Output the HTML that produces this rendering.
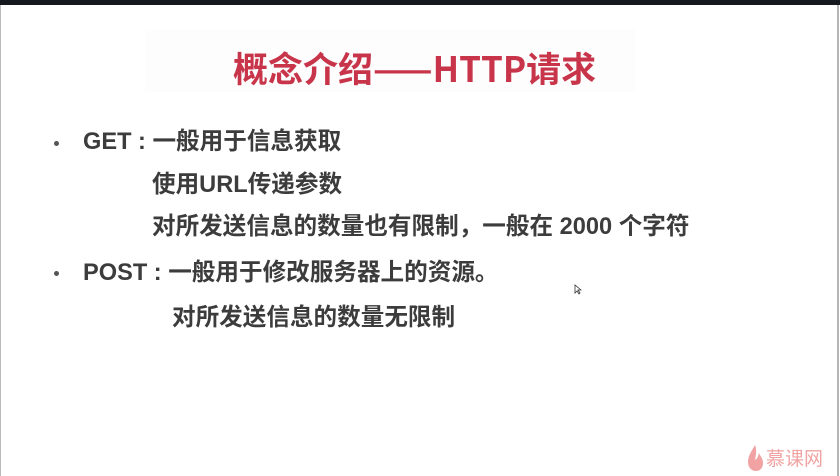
<!DOCTYPE html>
<html><head><meta charset="utf-8"><style>
body{margin:0;width:840px;height:476px;overflow:hidden;background:#fff;position:relative;font-family:"Liberation Sans","Noto Sans CJK SC",sans-serif}
.top{position:absolute;left:0;top:0;width:840px;height:5px;background:#15191d}
.lb{position:absolute;left:0;top:5px;width:1px;height:471px;background:#bbb}
.rb{position:absolute;left:837px;top:5px;width:2px;height:471px;background:#b5b5b5}
.tbox{position:absolute;left:145px;top:29px;width:490px;height:63px;background:#fdfdfd}
.title{position:absolute;left:233px;top:46px;font-size:35px;font-weight:bold;color:#c8354a;white-space:nowrap;line-height:44px;font-family:"Noto Sans CJK SC",sans-serif}
.t{position:absolute;font-size:23.6px;font-weight:bold;color:#3c3c3c;white-space:nowrap;line-height:30px}
.dot{position:absolute;width:5px;height:5px;border-radius:50%;background:#555}
.logo{position:absolute;left:766px;top:446px;font-size:19px;color:#f1a3a3;font-family:"Noto Sans CJK SC",sans-serif;line-height:24px}
</style></head><body>
<div class="top"></div><div class="lb"></div><div class="rb"></div>
<div class="tbox"></div>
<div class="title">概念介绍——HTTP请求</div>
<div class="dot" style="left:54px;top:141px"></div>
<div class="t" style="left:83px;top:127px">GET : 一般用于信息获取</div>
<div class="t" style="left:152px;top:170px">使用URL传递参数</div>
<div class="t" style="left:152px;top:212px">对所发送信息的数量也有限制，一般在 2000 个字符</div>
<div class="dot" style="left:54px;top:271px"></div>
<div class="t" style="left:83px;top:258px">POST : 一般用于修改服务器上的资源。</div>
<div class="t" style="left:172px;top:303px">对所发送信息的数量无限制</div>
<svg style="position:absolute;left:574px;top:284px" width="8" height="11"><path d="M1 1 L1 9 L3 7 L5 10 L6 9 L4 6 L7 6 Z" fill="#fff" stroke="#333" stroke-width="0.8"/></svg>
<svg style="position:absolute;left:747px;top:444px" width="17" height="28"><path d="M8 1 C4 8 1 12 1 18 C1 24 5 27 9 27 C13 27 16 24 16 19 C16 14 13 12 12 9 C11 13 10 15 8 16 C9 11 10 6 8 1 Z" fill="#f1a3a3"/></svg>
<div class="logo">慕课网</div>
</body></html>
